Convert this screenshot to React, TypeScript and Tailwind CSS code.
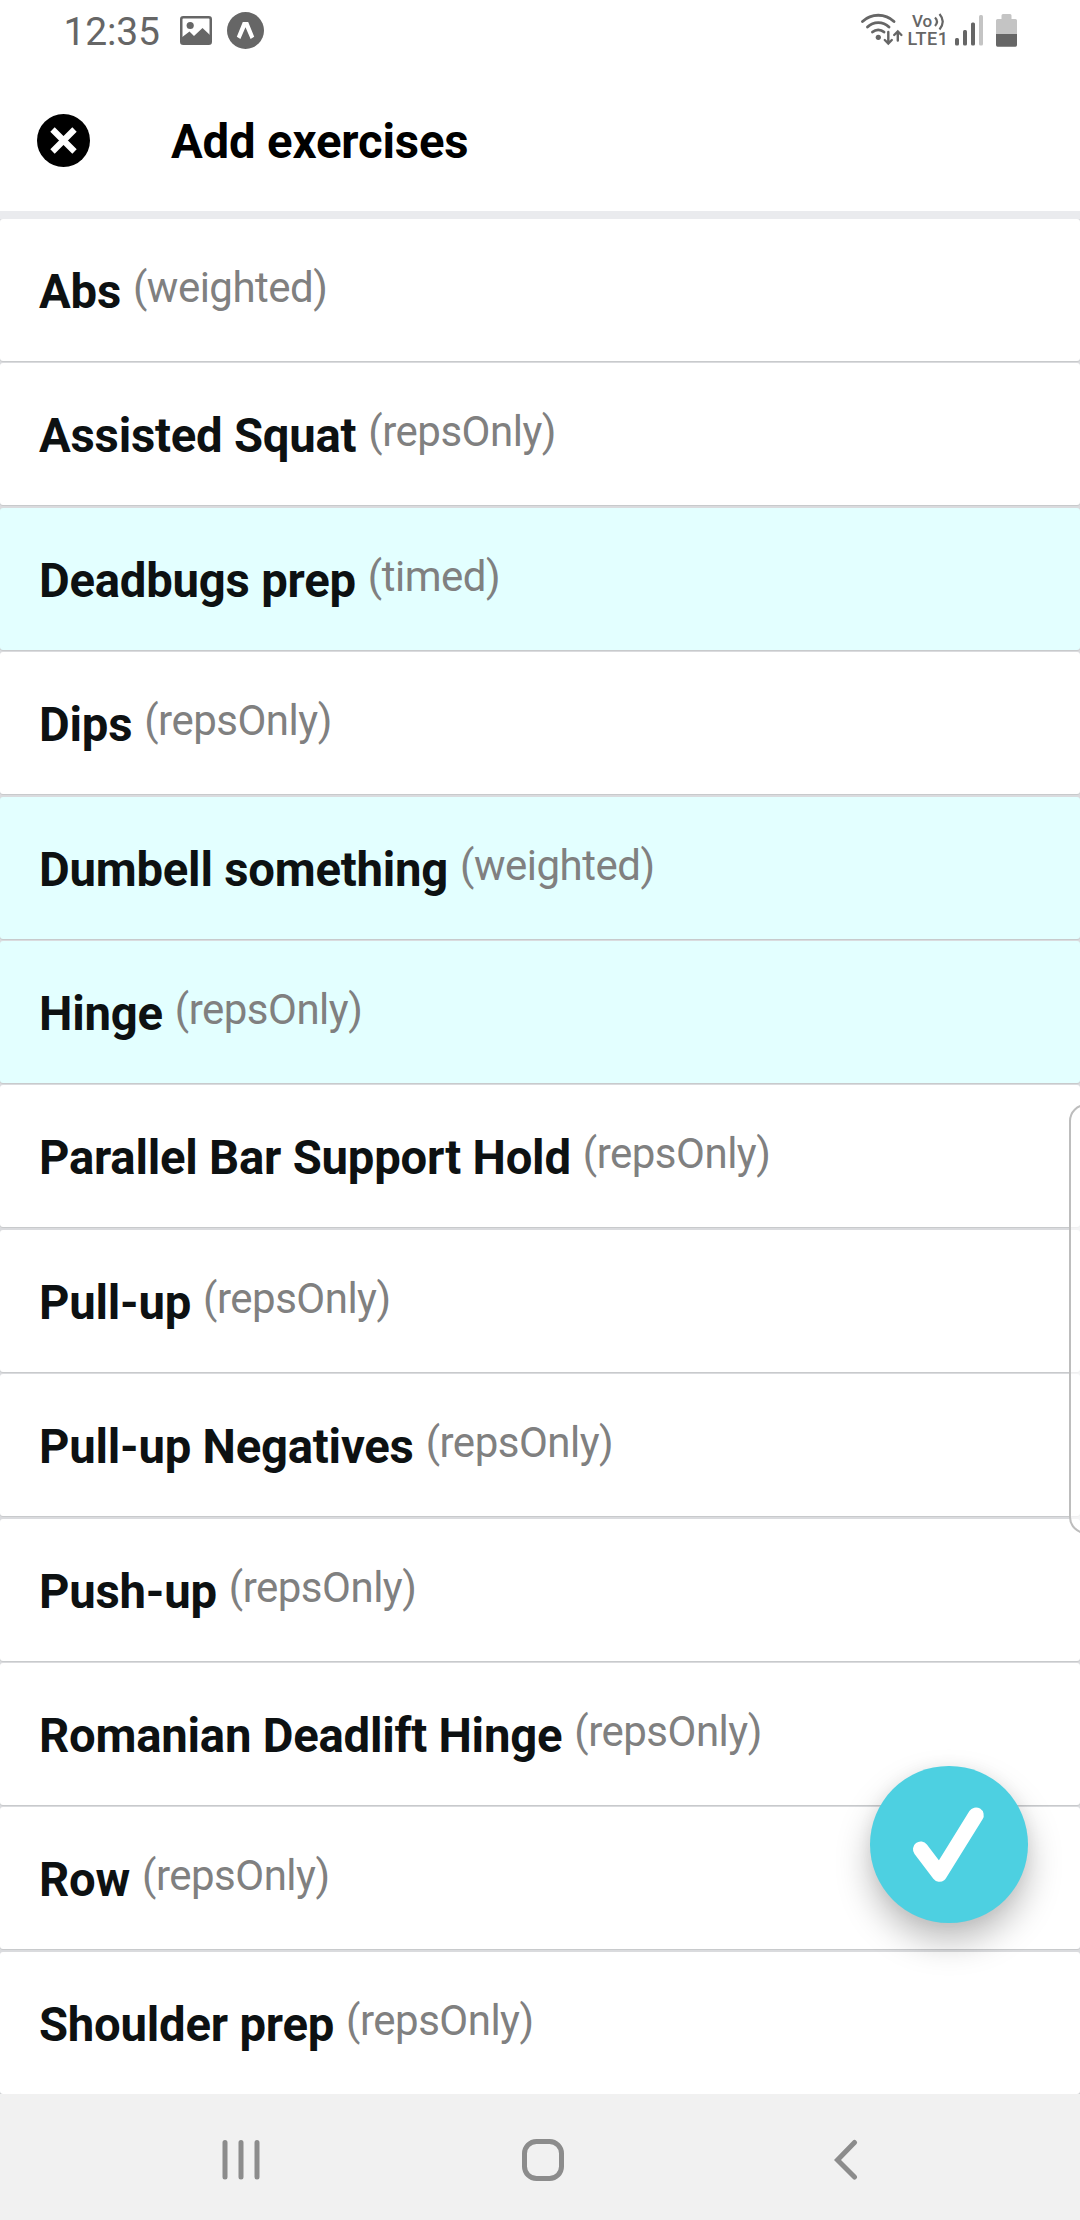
const exercises = [
  { name: 'Abs', type: 'weighted', selected: false },
  { name: 'Assisted Squat', type: 'repsOnly', selected: false },
  { name: 'Deadbugs prep', type: 'timed', selected: true },
  { name: 'Dips', type: 'repsOnly', selected: false },
  { name: 'Dumbell something', type: 'weighted', selected: true },
  { name: 'Hinge', type: 'repsOnly', selected: true },
  { name: 'Parallel Bar Support Hold', type: 'repsOnly', selected: false },
  { name: 'Pull-up', type: 'repsOnly', selected: false },
  { name: 'Pull-up Negatives', type: 'repsOnly', selected: false },
  { name: 'Push-up', type: 'repsOnly', selected: false },
  { name: 'Romanian Deadlift Hinge', type: 'repsOnly', selected: false },
  { name: 'Row', type: 'repsOnly', selected: false },
  { name: 'Shoulder prep', type: 'repsOnly', selected: false },
];

function StatusBar() {
  return (
    <div className="flex h-[63px] shrink-0 items-start justify-between pl-[63px] pr-[63px] text-[#666]">
      <div className="flex items-start">
        <span className="mt-[10px] w-[117px] pl-[0.5px] text-[39px] leading-[44px] tracking-[-0.2px]">12:35</span>
        <svg className="mt-[16px]" width="32" height="29" viewBox="0 0 32 29">
          <rect x="1.25" y="1.25" width="29.5" height="26.5" rx="2" fill="none" stroke="#666" strokeWidth="2.5" />
          <circle cx="10.2" cy="9.5" r="3.6" fill="#666" />
          <path d="M1 22 L9.5 15.5 L14 20 L22.5 12 L31 20 V28 H1Z" fill="#666" />
        </svg>
        <svg className="ml-[15px] mt-[12px]" width="37" height="37" viewBox="0 0 37 37">
          <circle cx="18.5" cy="18.5" r="18.5" fill="#666" />
          <path d="M9.8 24.8 L15.8 10 H21.2 L27.2 24.8 L23.6 27 L18.5 15.2 L13.4 27Z" fill="#fff" />
        </svg>
      </div>
      <div className="flex items-start">
        <svg className="mt-[12px]" width="44" height="34" viewBox="0 0 44 34" fill="none" stroke="#666" strokeWidth="2.9" strokeLinecap="round">
          <path d="M2.5 9.5 A23 23 0 0 1 34 9.5" />
          <path d="M7.5 15 A15.5 15.5 0 0 1 29 15" />
          <path d="M12.5 20 A8.7 8.7 0 0 1 24 20" />
          <circle cx="18.3" cy="25.3" r="2.6" fill="#666" stroke="none" />
          <path d="M28.3 20 V31 M24.8 28 L28.3 31.5 L31.8 28" strokeWidth="2.4" />
          <path d="M37.8 28.5 V20 M34.2 23 L37.8 19.5 L41.4 23" strokeWidth="2.4" />
        </svg>
        <div className="mt-[13px] w-[46px] pl-[3px] font-medium">
          <div className="flex h-[17px] pl-[5px]">
            <span className="w-[22px] text-[17px] leading-[17px]">Vo</span>
            <svg width="11" height="18" viewBox="0 0 11 18" fill="none" stroke="#666" strokeWidth="2.2">
              <path d="M1 4.5 Q5 8.5 1 13" />
              <path d="M5.5 1 Q12 8.5 5.5 16.5" />
            </svg>
          </div>
          <div className="pl-[0.5px] text-[18px] leading-[18px] tracking-[0.5px]">LTE1</div>
        </div>
        <svg className="ml-[5px] mt-[15px]" width="28" height="31" viewBox="0 0 28 31">
          <rect x="0" y="23" width="4" height="7.5" rx="1.5" fill="#666" />
          <rect x="8" y="15" width="4" height="15.5" rx="1.5" fill="#666" />
          <rect x="16" y="7.5" width="4" height="23" rx="1.5" fill="#666" />
          <rect x="24" y="0" width="4" height="30.5" rx="1.5" fill="#c4c4c4" />
        </svg>
        <svg className="ml-[13px] mt-[14px]" width="21" height="33" viewBox="0 0 21 33">
          <path d="M5.5 5 V1.5 Q5.5 0 7 0 H14 Q15.5 0 15.5 1.5 V5 H19.5 Q21 5 21 6.5 V20 H0 V6.5 Q0 5 1.5 5Z" fill="#c4c4c4" />
          <path d="M0 20 H21 V31 Q21 32.7 19.5 32.7 H1.5 Q0 32.7 0 31Z" fill="#666" />
        </svg>
      </div>
    </div>
  );
}

export default function App() {
  return (
    <div className="relative flex h-[2220px] w-[1080px] flex-col overflow-hidden bg-white font-[Roboto,sans-serif]">
      <StatusBar />
      <header className="flex h-[148px] shrink-0 items-center pl-[37px]">
        <svg className="mt-[7px]" width="53" height="53" viewBox="0 0 53 53">
          <circle cx="26.5" cy="26.5" r="26.5" fill="#000" />
          <path d="M15.5 15.5 L37.5 37.5 M37.5 15.5 L15.5 37.5" stroke="#fff" strokeWidth="6.2" />
        </svg>
        <h1 className="ml-[81px] mt-[10px] text-[47.25px] font-bold leading-[56px] tracking-[-0.15px] text-black">Add exercises</h1>
      </header>
      <main className="h-[1883px] shrink-0 overflow-hidden bg-[#dadbde]">
        <div className="h-[8px] bg-[#eaebee]" />
        {exercises.map((e) => (
          <div
            key={e.name}
            className={`mb-[2.4px] flex h-[142px] items-start rounded-[3px] pl-[39px] shadow-[0_1px_0_#c8cacc] ${e.selected ? 'bg-[#e3ffff]' : 'bg-white'}`}
          >
            <span className="mt-[45px] whitespace-pre text-[47.25px] font-bold leading-[56px] tracking-[-0.22px] text-[#0d1112]">{e.name}</span>
            <span className="ml-[12px] mt-[44px] text-[42px] leading-[50px] tracking-[-0.5px] text-[#808080]">({e.type})</span>
          </div>
        ))}
      </main>
      <nav className="flex h-[126px] shrink-0 items-start bg-[#f1f1f1] pl-[222px] pt-[45px]">
        <svg width="38" height="42" viewBox="0 0 38 42" stroke="#8c8c8c" strokeWidth="5" strokeLinecap="round">
          <path d="M3 3.5 V38 M19 3.5 V38 M35 3.5 V38" />
        </svg>
        <svg className="ml-[262px]" width="42" height="42" viewBox="0 0 42 42">
          <rect x="2.5" y="2.5" width="37" height="37" rx="12" fill="none" stroke="#8c8c8c" strokeWidth="5" />
        </svg>
        <svg className="ml-[270px]" width="24" height="42" viewBox="0 0 24 42" fill="none" stroke="#8c8c8c" strokeWidth="5" strokeLinecap="round">
          <path d="M20.5 3.5 L3.5 21 L20.5 38" strokeLinejoin="miter" />
        </svg>
      </nav>
      <div className="absolute left-[1069px] top-[1104px] h-[430px] w-[34px] rounded-[18px] border-2 border-[#bdbdbd] bg-white/70" />
      <button className="absolute left-[870px] top-[1766px] h-[157px] w-[158px] rounded-full bg-[#4dd0e1] shadow-[0_18px_34px_rgba(0,0,0,0.26),0_0_16px_rgba(0,0,0,0.05)]">
        <svg width="158" height="157" viewBox="0 0 158 157" fill="none" stroke="#fff" strokeWidth="15.5" strokeLinecap="round" strokeLinejoin="round">
          <path d="M50.7 83.2 L69.5 108 L106 49.2" />
        </svg>
      </button>
    </div>
  );
}
